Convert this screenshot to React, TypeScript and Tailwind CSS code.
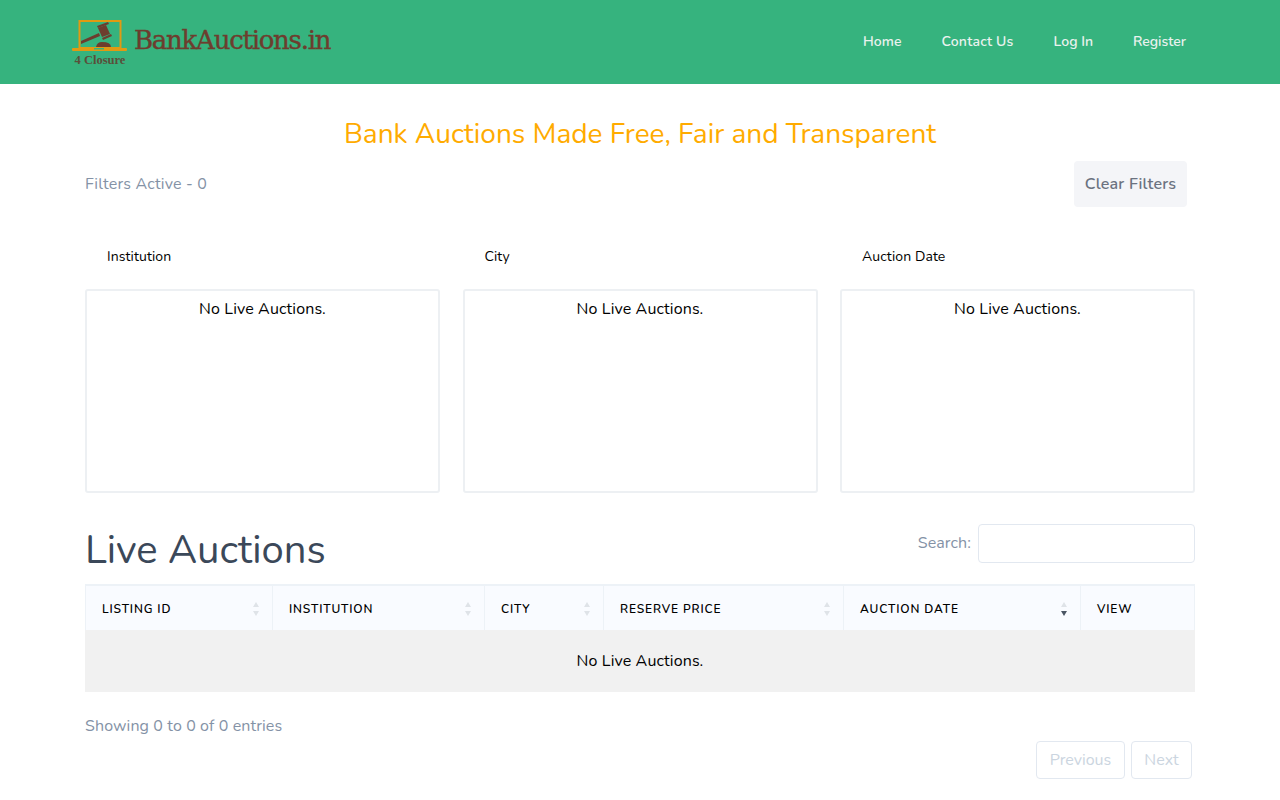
import React from "react";

const font = { fontFamily: "Nunito, Lato, 'Noto Sans', sans-serif" };

const Logo = () => (
  <div className="flex items-start pt-[19px]">
    <div className="flex w-[56px] flex-col items-center">
      <svg width="56" height="33" viewBox="0 0 56 33" className="block">
        <rect x="7.5" y="2" width="41" height="27" fill="none" stroke="#e09a12" strokeWidth="2" />
        <rect x="0" y="29" width="55" height="3" rx="1" fill="#e09a12" />
        <rect x="22" y="29" width="10" height="1.5" fill="#36b37e" />
        <path d="M9 22 L27 14 L28 17 L9 25 Z" fill="#6d3d2e" />
        <path d="M26 9 L34 6 L38 15 L30 18 Z" fill="#6d3d2e" />
        <path d="M25 7 L36 3 L37 5 L26 9 Z M30 19 L39 15 L40 17 L31 21 Z" fill="#6d3d2e" />
        <path d="M24 28 Q25 23 30 23 Q39 23 39 28 Z" fill="#6d3d2e" />
      </svg>
      <span className="mt-[2px] text-[12.5px] leading-[13px] font-bold whitespace-nowrap text-[#5a4f3a]" style={{ fontFamily: "'Liberation Serif', serif" }}>
        4 Closure
      </span>
    </div>
    <span className="mt-[5px] ml-[6px] text-[26px] leading-8 text-[#6d3d2e] [-webkit-text-stroke:0.4px_#6d3d2e]" style={{ fontFamily: "'DejaVu Serif', serif", letterSpacing: "-1.25px" }}>
      BankAuctions.in
    </span>
  </div>
);

const NavLinks = () => (
  <nav className="flex items-center text-sm font-semibold text-[#eaf2ee]">
    <a className="px-5 py-2 tracking-[0.1px]" href="#">Home</a>
    <a className="px-5 py-2 tracking-[0.2px]" href="#">Contact Us</a>
    <a className="px-5 py-2" href="#">Log In</a>
    <a className="px-5 py-2" href="#">Register</a>
  </nav>
);

const FilterBox = ({ label }: { label: string }) => (
  <div className="flex w-[355px] flex-col">
    <div className="pt-px pl-[22px] text-sm leading-5 tracking-[0.1px] text-black">{label}</div>
    <div className="mt-[22px] h-[204px] rounded-[3px] border-2 border-[#edf0f3] pt-[6px] text-center text-base leading-6 tracking-[0.12px] text-black">
      No Live Auctions.
    </div>
  </div>
);

const columns = [
  { name: "LISTING ID", w: "w-[187px]", sort: true },
  { name: "INSTITUTION", w: "w-[212px]", sort: true },
  { name: "CITY", w: "w-[119px]", sort: true },
  { name: "RESERVE PRICE", w: "w-[240px]", sort: true },
  { name: "AUCTION DATE", w: "w-[237px]", sort: true, active: true },
  { name: "VIEW", w: "flex-1", sort: false },
];

const SortArrows = ({ active }: { active?: boolean }) => (
  <svg width="8" height="16" viewBox="0 0 8 16" className="absolute top-[15px] right-[12px]">
    <path d="M4 1 L7 6 L1 6 Z" fill="#dfe3e8" />
    <path d="M4 15 L7 10 L1 10 Z" fill={active ? "#4b5563" : "#dfe3e8"} />
  </svg>
);

export default function App() {
  return (
    <div className="min-h-screen bg-white" style={font}>
      {/* Header */}
      <header className="flex h-[84px] items-start justify-between bg-[#36b37e] pr-[74px] pl-[72px]">
        <Logo />
        <div className="flex h-full items-center">
          <NavLinks />
        </div>
      </header>

      <main className="mx-[85px]">
        <h1 className="pt-[30px] text-center text-[28px] leading-10 text-[#ffab00]">
          Bank Auctions Made Free, Fair and Transparent
        </h1>

        {/* Filters */}
        <div className="mt-[7px] flex items-center justify-between pr-2">
          <span className="text-base tracking-[0.2px] text-[#8492a6]">Filters Active - 0</span>
          <button className="h-[46px] w-[113px] rounded-[4px] bg-[#f4f5f8] text-base font-semibold tracking-[0.2px] text-[#6b7280]">
            Clear Filters
          </button>
        </div>

        <div className="mt-[39px] flex justify-between">
          <FilterBox label="Institution" />
          <FilterBox label="City" />
          <FilterBox label="Auction Date" />
        </div>

        {/* Live auctions */}
        <div className="mt-[31px] flex items-start justify-between">
          <h2 className="pt-px text-[40px] leading-[51px] text-[#3b4859]">Live Auctions</h2>
          <div className="flex items-center gap-[7px]">
            <span className="mt-[-1px] text-base tracking-[0.1px] text-[#8492a6]">Search:</span>
            <input className="h-[39px] w-[217px] rounded-[4px] border border-[#e2e8f0] bg-white" />
          </div>
        </div>

        <div className="mt-[8px]">
          <div className="flex h-[46px] border-t-2 border-r border-l border-[#edf2f7] bg-[#f9fbff]">
            {columns.map((col, i) => (
              <div
                key={col.name}
                className={`${col.w} relative flex items-center pt-0.5 pl-4 text-xs font-semibold tracking-[0.85px] text-black ${i < 5 ? "border-r border-[#edf2f7]" : ""}`}
              >
                {col.name}
                {col.sort && <SortArrows active={col.active} />}
              </div>
            ))}
          </div>
          <div className="flex h-[62px] items-center justify-center bg-[#f1f1f1] text-base tracking-[0.12px] text-black">
            No Live Auctions.
          </div>
        </div>

        <div className="mt-[22px] text-base leading-6 tracking-[0.11px] text-[#8492a6]">Showing 0 to 0 of 0 entries</div>

        <div className="mt-[3px] flex justify-end gap-[6px] pr-[3px]">
          <span className="flex h-[38px] w-[89px] items-center justify-center rounded-[4px] border border-[#e2e8f0] text-base text-[#cbd5e0]">
            Previous
          </span>
          <span className="flex h-[38px] w-[61px] items-center justify-center rounded-[4px] border border-[#e2e8f0] text-base text-[#cbd5e0]">
            Next
          </span>
        </div>
      </main>
    </div>
  );
}
